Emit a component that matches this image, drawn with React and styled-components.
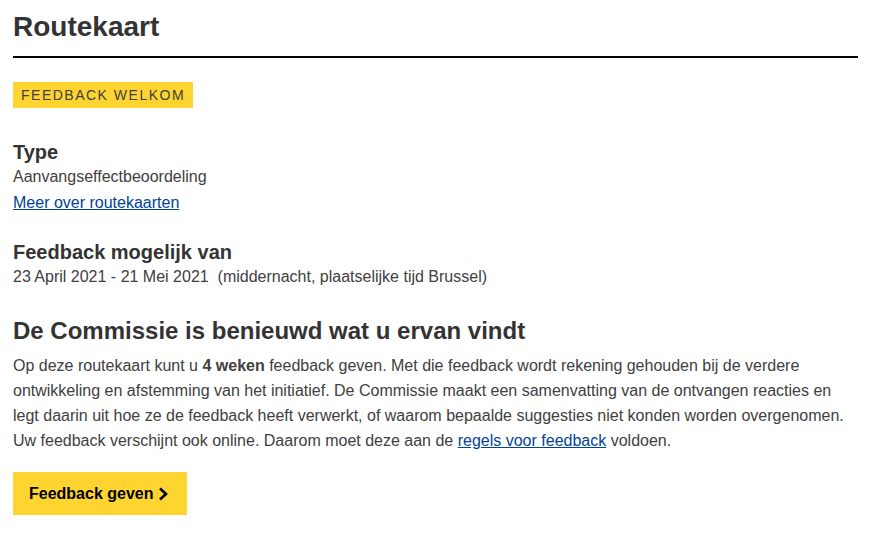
import React from "react"
import styled, { createGlobalStyle } from "styled-components"

const GlobalStyle = createGlobalStyle`
  body {
    margin: 0;
    background: #fff;
    font-family: "Liberation Sans", Arial, sans-serif;
    color: #404040;
  }
`

const Page = styled.main`
  padding: 10px 12px 0 13px;
`

const Header = styled.header`
  border-bottom: 2px solid #000;
  padding-bottom: 12px;
`

const Title = styled.h1`
  margin: 0;
  font-size: 28px;
  line-height: 34px;
  font-weight: 700;
  color: #333;
`

const Badge = styled.div`
  width: fit-content;
  margin-top: 24px;
  padding: 5px 8px 4px;
  background: #fed430;
  color: #404040;
  font-size: 14px;
  line-height: 17px;
  letter-spacing: 1.5px;
  text-transform: uppercase;
`

const Section = styled.section`
  margin-top: ${(p) => p.$gap}px;
`

const Label = styled.h2`
  margin: 0;
  font-size: 20px;
  line-height: 24px;
  font-weight: 700;
  color: #333;
`

const Text = styled.p`
  margin: 0;
  font-size: 16px;
  line-height: 25px;
  margin-top: ${(p) => p.$top || 0}px;
`

const Link = styled.a`
  color: #004494;
  text-decoration: underline;
`

const Heading = styled.h2`
  margin: 0 0 8px;
  font-size: 24px;
  line-height: 29px;
  font-weight: 700;
  color: #333;
`

const Button = styled.button`
  display: flex;
  align-items: center;
  gap: 4px;
  width: fit-content;
  margin-top: 19px;
  height: 43px;
  padding: 0 19px 0 16px;
  border: 0;
  background: #fed430;
  color: #000;
  font-family: "Liberation Sans", Arial, sans-serif;
  font-size: 16px;
  font-weight: 700;
  cursor: pointer;
`

function Chevron() {
  return (
    <svg width="10" height="14" viewBox="0 0 10 14">
      <path d="M2 1.5 L8 7 L2 12.5" fill="none" stroke="#000" strokeWidth="2.6" />
    </svg>
  )
}

function App() {
  return (
    <>
      <GlobalStyle />
      <Page>
        <Header>
          <Title>Routekaart</Title>
        </Header>
        <Badge>Feedback welkom</Badge>

        <Section $gap={32}>
          <Label>Type</Label>
          <Text>Aanvangseffectbeoordeling</Text>
          <Text $top={1}>
            <Link href="#">Meer over routekaarten</Link>
          </Text>
        </Section>

        <Section $gap={25}>
          <Label>Feedback mogelijk van</Label>
          <Text>23 April 2021 - 21 Mei 2021&nbsp; (middernacht, plaatselijke tijd Brussel)</Text>
        </Section>

        <Section $gap={27}>
          <Heading>De Commissie is benieuwd wat u ervan vindt</Heading>
          <Text>
            Op deze routekaart kunt u <b>4 weken</b> feedback geven. Met die feedback wordt rekening
            gehouden bij de verdere ontwikkeling en afstemming van het initiatief. De Commissie maakt
            een samenvatting van de ontvangen reacties en legt daarin uit hoe ze de feedback heeft
            verwerkt, of waarom bepaalde suggesties niet konden worden overgenomen. Uw feedback
            verschijnt ook online. Daarom moet deze aan de <Link href="#">regels voor feedback</Link>{" "}
            voldoen.
          </Text>
          <Button>
            Feedback geven
            <Chevron />
          </Button>
        </Section>
      </Page>
    </>
  )
}

export default App
